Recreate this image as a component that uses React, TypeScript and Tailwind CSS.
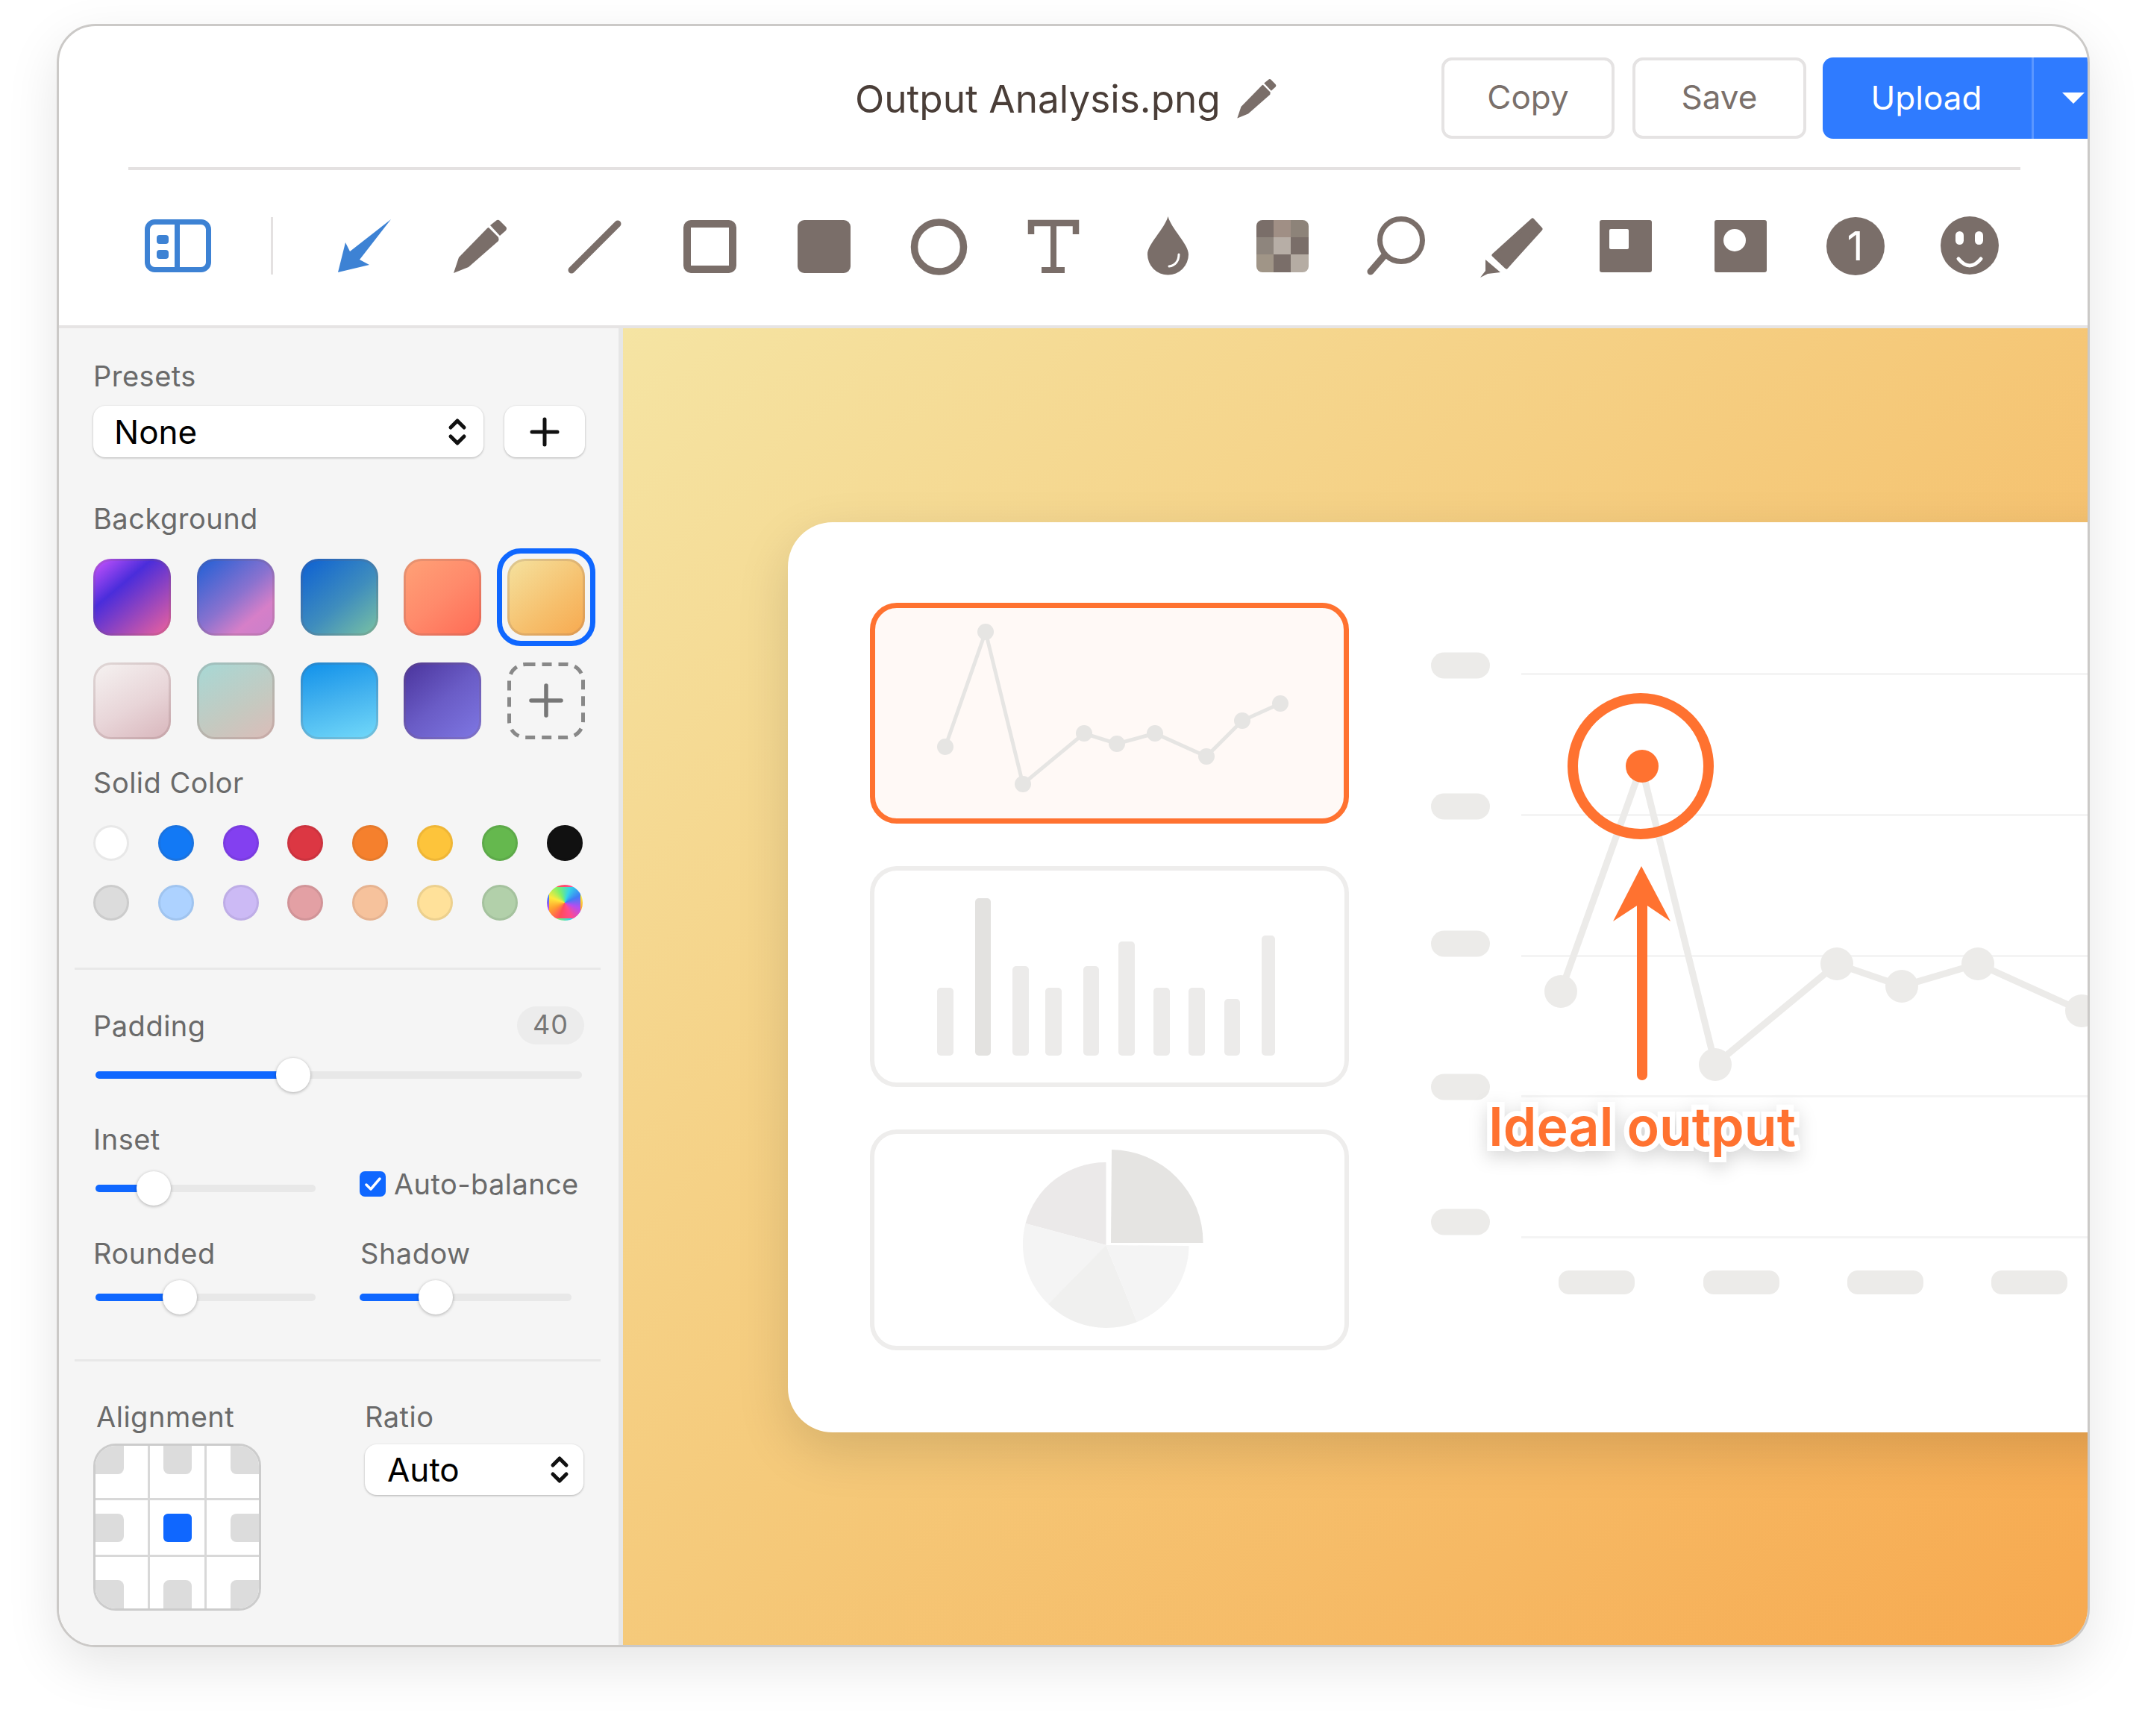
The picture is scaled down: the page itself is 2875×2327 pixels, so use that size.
const ink = "#7a6e69";

const swatches = [
  "bg-[linear-gradient(140deg,#cf55ff_0%,#4a2ddb_35%,#f2639b_100%)]",
  "bg-[linear-gradient(140deg,#1d5fd6_0%,#8a72cf_50%,#d67fc8_75%,#c97fcb_100%)]",
  "bg-[linear-gradient(140deg,#0b5fd4_0%,#3f8dbd_55%,#7cc4a2_100%)]",
  "bg-[linear-gradient(140deg,#ffa277_0%,#ff8a6b_50%,#ff6a54_100%)]",
  "bg-[linear-gradient(140deg,#f5e3a0_0%,#f6bf6c_60%,#f7a94f_100%)]",
  "bg-[linear-gradient(150deg,#f6f3f2_0%,#e8d5d8_55%,#d8b5bb_100%)]",
  "bg-[linear-gradient(150deg,#a6d9d6_0%,#c5c9c0_60%,#dcbcb8_100%)]",
  "bg-[linear-gradient(165deg,#0f90ea_0%,#46b4ef_50%,#73dafa_100%)]",
  "bg-[linear-gradient(140deg,#4a339b_0%,#6a5cc6_50%,#7f78e4_100%)]",
];

const solids = [
  "bg-white border-[#e8e8e8]", "bg-[#1279f5] border-[#1a73e0]", "bg-[#8340f0] border-[#7a3ce0]", "bg-[#dc3743] border-[#cc333f]",
  "bg-[#f5802d] border-[#e67a2c]", "bg-[#fdc43b] border-[#efb636]", "bg-[#65b84e] border-[#5daa49]", "bg-[#111111] border-[#111111]",
  "bg-[#dcdcdc] border-[#cccccc]", "bg-[#add2ff] border-[#a0c4ef]", "bg-[#ccbaf5] border-[#beade6]", "bg-[#e3a0a4] border-[#d19498]",
  "bg-[#f6c29c] border-[#e6b391]", "bg-[#ffe19a] border-[#ecd08e]", "bg-[#b2d0aa] border-[#a5c29e]",
  "bg-[conic-gradient(from_200deg,#ff4b5c,#ff9f2e,#ffe93c,#7df06a,#34d4e8,#3f7cf5,#b64df0,#ff4b8e,#ff4b5c)] border-transparent",
];

const alignCells = [
  "items-start justify-start", "items-start justify-center", "items-start justify-end",
  "items-center justify-start", "items-center justify-center", "items-center justify-end",
  "items-end justify-start", "items-end justify-center", "items-end justify-end",
];

const blockShape = [
  "rounded-br-[8px]", "rounded-b-[8px]", "rounded-bl-[8px]",
  "rounded-r-[8px]", "rounded-[6px]", "rounded-l-[8px]",
  "rounded-tr-[8px]", "rounded-t-[8px]", "rounded-tl-[8px]",
];

const mosaic = ["#7a6e69", "#a08f85", "#8d8379", "#8e857d", "#b7aea6", "#7a6e69", "#a09587", "#7a6e69", "#b5aca3"];

const barData = [
  [1257, 22, 1324, "#ecebea"], [1308, 21, 1204, "#e3e2e0"], [1358, 22, 1295, "#ecebea"], [1402, 22, 1324, "#ecebea"],
  [1453, 21, 1295, "#ecebea"], [1500, 22, 1262, "#ecebea"], [1547, 22, 1324, "#ecebea"], [1594, 22, 1324, "#ecebea"],
  [1642, 21, 1339, "#ecebea"], [1692, 18, 1254, "#ecebea"],
] as const;

const smallLine = [[1268, 1002], [1322, 848], [1372, 1052], [1454, 984], [1498, 998], [1549, 984], [1618, 1015], [1666, 967], [1717, 944]];
const bigLine = [[2092, 1329], [2200, 1027], [2299, 1427], [2462, 1292], [2549, 1322], [2651, 1292], [2790, 1355]];

const PencilIcon = ({ size = 90, color = ink }: { size?: number; color?: string }) => (
  <svg width={size} height={size} viewBox="0 0 90 90" fill={color}>
    <path d="M57 20 L70 33 Q71 36 70 38 L30 73 L10 81 L17 60 L55 21 Q56 20 57 20Z" />
    <path d="M68 10 Q70 9 72 11 L80 19 Q82 21 80 24 L72 31 L59 17Z" />
  </svg>
);

const Tool = ({ children }: { children: React.ReactNode }) => (
  <div className="flex h-[90px] w-[153.6px] shrink-0 items-center justify-center">{children}</div>
);

const ToolSvg = ({ children }: { children: React.ReactNode }) => (
  <svg width="90" height="90" viewBox="0 0 90 90" fill={ink}>
    {children}
  </svg>
);

const Label = ({ children, className = "" }: { children: React.ReactNode; className?: string }) => (
  <div className={`h-[44px] text-[38px] leading-[44px] tracking-[0.5px] text-[#6a6a6a] ${className}`}>{children}</div>
);

const Chevrons = () => (
  <svg width="26" height="38" viewBox="0 0 26 38" fill="none" stroke="#111" strokeWidth="5" strokeLinecap="round" strokeLinejoin="round">
    <path d="M4 13 L13 4 L22 13" />
    <path d="M4 25 L13 34 L22 25" />
  </svg>
);

const Slider = ({ width, thumb }: { width: number; thumb: number }) => (
  <div className="relative flex h-[46px] shrink-0 items-center" style={{ width }}>
    <div className="h-[10px] w-full overflow-hidden rounded-full bg-[#e8e8e8]">
      <div className="h-full bg-[#0f67ff]" style={{ width: thumb }} />
    </div>
    <div
      className="absolute top-0 h-[46px] w-[46px] rounded-full bg-white shadow-[0_1px_4px_rgba(0,0,0,0.3)]"
      style={{ left: thumb - 23 }}
    />
  </div>
);

const ThumbCard = ({ children, active = false }: { children: React.ReactNode; active?: boolean }) => (
  <div
    className={`h-[296px] w-[642px] overflow-hidden rounded-[36px] ${
      active ? "border-[7px] border-[#ff7230] bg-[#fff9f6]" : "border-[6px] border-[#eeedec] bg-white"
    }`}
  >
    {children}
  </div>
);

const Header = () => (
  <header className="shrink-0">
    <div className="relative flex h-[189px] items-start">
      <div className="ml-[1067px] mt-[64px] flex items-center">
        <span className="text-[51.3px] leading-[60px] text-[#4a3e38]">Output Analysis.png</span>
        <span className="ml-[15px]">
          <PencilIcon size={66} />
        </span>
      </div>
      <div className="absolute right-0 top-[42px] flex">
        <button className="mr-[24px] h-[109px] w-[232px] rounded-[14px] border-4 border-[#e5e3e3] pb-[4px] text-[44px] text-[#7a706b]">Copy</button>
        <button className="mr-[22px] h-[109px] w-[233px] rounded-[14px] border-4 border-[#e5e3e3] pb-[4px] text-[44px] text-[#7a706b]">Save</button>
        <div className="flex h-[109px] w-[355px] rounded-l-[14px] bg-[#2f7bff]">
          <button className="w-[283px] border-r-[3px] border-[#5b97ff] pb-[2px] pr-[2px] text-[44px] text-white">Upload</button>
          <div className="flex flex-1 items-center justify-end pr-[4px]">
            <div className="h-0 w-0 border-x-[15px] border-t-[15px] border-x-transparent border-t-white" />
          </div>
        </div>
      </div>
    </div>
    <div className="ml-[93px] h-[4px] w-[2536px] bg-[#e4e1e1]" />
    <div className="flex h-[208px] items-center pb-[5px] pl-[115px]">
      <svg width="89" height="71" viewBox="0 0 89 71" fill="none" className="shrink-0">
        <rect x="3.5" y="3.5" width="82" height="64" rx="10" stroke="#3d82d4" strokeWidth="7" />
        <path d="M43.5 3 V68" stroke="#3d82d4" strokeWidth="7" />
        <rect x="16" y="21" width="16" height="12" rx="4" fill="#3d82d4" />
        <rect x="16" y="41" width="16" height="12" rx="4" fill="#3d82d4" />
      </svg>
      <div className="ml-[80px] mr-[47px] h-[77px] w-[3px] shrink-0 bg-[#e4e1e1]" />
      <div className="flex">
        <Tool>
          <ToolSvg>
            <path d="M79 9 L37 63 L50 70 L8 80 L18 40 L24 52Z" fill="#3d82d4" />
          </ToolSvg>
        </Tool>
        <Tool>
          <PencilIcon />
        </Tool>
        <Tool>
          <ToolSvg>
            <path d="M76 15 L14 77" stroke={ink} strokeWidth="9" strokeLinecap="round" />
          </ToolSvg>
        </Tool>
        <Tool>
          <ToolSvg>
            <rect x="15" y="15" width="61" height="61" rx="5" fill="none" stroke={ink} strokeWidth="10" />
          </ToolSvg>
        </Tool>
        <Tool>
          <ToolSvg>
            <rect x="10" y="10" width="71" height="71" rx="9" />
          </ToolSvg>
        </Tool>
        <Tool>
          <ToolSvg>
            <circle cx="45.5" cy="46" r="33" fill="none" stroke={ink} strokeWidth="9.5" />
          </ToolSvg>
        </Tool>
        <Tool>
          <ToolSvg>
            <path d="M16 29 V14 H76 V29" fill="none" stroke={ink} strokeWidth="8.5" />
            <path d="M46 14 V77 M30 77 H61" fill="none" stroke={ink} strokeWidth="8" />
          </ToolSvg>
        </Tool>
        <Tool>
          <ToolSvg>
            <path d="M45.5 5 C50 22 73 42 73 56 A27.5 27.5 0 0 1 18 56 C18 42 41 22 45.5 5Z" />
            <path d="M60 56 C60 65 55 71 47 72" fill="none" stroke="#fff" strokeWidth="3" strokeLinecap="round" />
          </ToolSvg>
        </Tool>
        <Tool>
          <div className="grid h-[70px] w-[70px] grid-cols-3 grid-rows-3 overflow-hidden rounded-[8px]">
            {mosaic.map((c, i) => (
              <div key={i} style={{ background: c }} />
            ))}
          </div>
        </Tool>
        <Tool>
          <ToolSvg>
            <circle cx="51" cy="37" r="28.5" fill="none" stroke={ink} strokeWidth="7" />
            <path d="M29 57 L10 79" stroke={ink} strokeWidth="9" strokeLinecap="round" />
          </ToolSvg>
        </Tool>
        <Tool>
          <ToolSvg>
            <path d="M73 10 L84 22 L38 73 L21 57Z" stroke={ink} strokeWidth="5" strokeLinejoin="round" />
            <path d="M10 63 L30 80 L13 82 L3 87 L10 78Z" />
          </ToolSvg>
        </Tool>
        <Tool>
          <ToolSvg>
            <rect x="10" y="10" width="70" height="70" rx="3" />
            <rect x="23" y="22" width="26" height="27" rx="2" fill="#fff" />
          </ToolSvg>
        </Tool>
        <Tool>
          <ToolSvg>
            <rect x="10" y="10" width="70" height="70" rx="3" />
            <circle cx="37" cy="37" r="15" fill="#fff" />
          </ToolSvg>
        </Tool>
        <Tool>
          <div className="flex h-[78px] w-[78px] items-center justify-center rounded-full bg-[#7a6e69] text-[54px] leading-none text-white">
            1
          </div>
        </Tool>
        <Tool>
          <ToolSvg>
            <circle cx="45" cy="44" r="39" />
            <rect x="26" y="25" width="11" height="18" rx="5.5" fill="#fff" />
            <rect x="52" y="25" width="11" height="18" rx="5.5" fill="#fff" />
            <path d="M30 62 Q45 80 60 62" fill="none" stroke="#fff" strokeWidth="5" strokeLinecap="round" />
          </ToolSvg>
        </Tool>
      </div>
    </div>
  </header>
);

const Sidebar = () => (
  <aside className="h-full w-[756px] shrink-0 border-r-[6px] border-[#e6e6e6] bg-[#f5f5f5] pl-[46px] pt-[42px]">
    <Label>Presets</Label>
    <div className="mt-[18px] flex gap-[28px]">
      <div className="flex h-[69px] w-[523px] items-center justify-between rounded-[16px] bg-white pl-[28px] pr-[22px] text-[44px] text-black shadow-[0_1px_3px_rgba(0,0,0,0.28)]">
        <span>None</span>
        <Chevrons />
      </div>
      <div className="flex h-[69px] w-[108px] items-center justify-center rounded-[16px] bg-white shadow-[0_1px_3px_rgba(0,0,0,0.28)]">
        <svg width="40" height="40" viewBox="0 0 40 40" stroke="#111" strokeWidth="5" strokeLinecap="round">
          <path d="M20 3 V37 M3 20 H37" />
        </svg>
      </div>
    </div>

    <Label className="mt-[60px]">Background</Label>
    <div className="mt-[32px] grid w-[658px] grid-cols-[repeat(5,104px)] gap-x-[34.8px] gap-y-[36px]">
      {swatches.map((s, i) => (
        <div key={s} className="relative h-[103px] w-[104px]">
          {i === 4 && <div className="absolute -inset-x-[14px] -inset-y-[14px] rounded-[32px] border-[7px] border-[#0f67ff]" />}
          <div className={`h-full w-full rounded-[24px] shadow-[inset_0_0_0_3px_rgba(120,90,90,0.18)] ${s}`} />
        </div>
      ))}
      <div className="flex h-[103px] w-[104px] items-center justify-center">
        <svg width="104" height="103" viewBox="0 0 104 103" fill="none">
          <rect x="2.5" y="2.5" width="99" height="98" rx="22" stroke="#888888" strokeWidth="5" strokeDasharray="13 9" />
          <path d="M52 31 V71 M32 51 H72" stroke="#777" strokeWidth="5.5" strokeLinecap="round" />
        </svg>
      </div>
    </div>

    <Label className="mt-[36px]">Solid Color</Label>
    <div className="mt-[35px] grid w-[658px] grid-cols-[repeat(8,48px)] gap-x-[38.8px] gap-y-[32px]">
      {solids.map((c) => (
        <div key={c} className={`h-[48px] w-[48px] rounded-full border-[3px] ${c}`} />
      ))}
    </div>

    <div className="-ml-[25px] mt-[63px] h-[3px] w-[705px] bg-[#e8e8e8]" />

    <div className="mt-[49px] flex h-[51px] w-[658px] items-center justify-between">
      <Label>Padding</Label>
      <div className="flex h-[51px] w-[90px] items-center justify-center rounded-full bg-[#ececec] pb-[3px] text-[36px] tracking-[1px] text-[#777777]">40</div>
    </div>
    <div className="ml-[3px] mt-[18px]">
      <Slider width={652} thumb={265} />
    </div>

    <Label className="mt-[41px]">Inset</Label>
    <div className="ml-[3px] mt-[21px] flex">
      <Slider width={295} thumb={78} />
      <div className="-mt-[6px] ml-[59px] flex h-[46px] items-center">
        <div className="flex h-[34px] w-[35px] items-center justify-center rounded-[7px] bg-[#0f67ff]">
          <svg width="24" height="22" viewBox="0 0 24 22" fill="none" stroke="#fff" strokeWidth="3.5" strokeLinecap="round" strokeLinejoin="round">
            <path d="M3 12 L9 18 L21 4" />
          </svg>
        </div>
        <span className="ml-[11px] text-[38px] tracking-[0.4px] text-[#6a6a6a]">Auto-balance</span>
      </div>
    </div>

    <div className="mt-[42px] flex">
      <Label className="w-[358px]">Rounded</Label>
      <Label>Shadow</Label>
    </div>
    <div className="ml-[3px] mt-[14px] flex">
      <Slider width={295} thumb={113} />
      <div className="ml-[59px]">
        <Slider width={284} thumb={102} />
      </div>
    </div>

    <div className="-ml-[25px] mt-[60px] h-[3px] w-[705px] bg-[#e8e8e8]" />

    <div className="mt-[52px] flex">
      <div className="w-[364px]">
        <Label className="ml-[4px]">Alignment</Label>
        <div className="mt-[14px] grid h-[224px] w-[225px] grid-cols-[70px_73px_70px] grid-rows-[70px_73px_69px] gap-[3px] overflow-hidden rounded-[30px] border-[3px] border-[#cccccc] bg-[#d8d8d8]">
          {alignCells.map((c, i) => (
            <div key={c} className={`flex bg-white ${c}`}>
              <div className={`h-[38px] w-[38px] ${i === 4 ? "bg-[#0f67ff]" : "bg-[#dcdcdc]"} ${blockShape[i]}`} />
            </div>
          ))}
        </div>
      </div>
      <div>
        <Label>Ratio</Label>
        <div className="mt-[15px] flex h-[68px] w-[293px] items-center justify-between rounded-[16px] bg-white pl-[30px] pr-[19px] text-[44px] text-black shadow-[0_1px_3px_rgba(0,0,0,0.28)]">
          <span>Auto</span>
          <Chevrons />
        </div>
      </div>
    </div>
  </aside>
);

const Thumbs = () => (
  <div className="flex shrink-0 flex-col gap-[57px]">
    <ThumbCard active>
      <svg width="628" height="282" viewBox="1174 816 628 282">
        <polyline points={smallLine.map((p) => p.join(",")).join(" ")} fill="none" stroke="#e6e5e3" strokeWidth="5" />
        {smallLine.map(([x, y]) => (
          <circle key={x} cx={x} cy={y} r="11" fill="#e6e5e3" />
        ))}
      </svg>
    </ThumbCard>
    <ThumbCard>
      <svg width="630" height="284" viewBox="1173 1167 630 284">
        {barData.map(([x, w, top, fill]) => (
          <rect key={x} x={x} y={top} width={w} height={1415 - top} rx="5" fill={fill} />
        ))}
      </svg>
    </ThumbCard>
    <ThumbCard>
      <svg width="630" height="284" viewBox="1173 1520 630 284">
        <path d="M1483.5 1669 L1483.5 1558 A111 111 0 0 0 1375.5 1640Z" fill="#ebe9e9" />
        <path d="M1483.5 1669 L1375.5 1640 A111 111 0 0 0 1406 1748Z" fill="#f4f4f4" />
        <path d="M1483.5 1669 L1406 1748 A111 111 0 0 0 1525 1772Z" fill="#f0f0ef" />
        <path d="M1483.5 1669 L1525 1772 A111 111 0 0 0 1594.5 1670Z" fill="#f4f4f4" />
        <path d="M1490 1666 L1491 1541 A124 124 0 0 1 1613.5 1666Z" fill="#e5e4e2" />
      </svg>
    </ThumbCard>
  </div>
);

const MainChart = () => (
  <div className="relative ml-[92px] mt-[52px] h-[900px] w-[900px] shrink-0">
    <svg width="900" height="900" viewBox="1900 860 900 900">
      {[892, 1081, 1265, 1457, 1638].map((y) => (
        <rect key={y} x="1918" y={y - 17.5} width="79" height="35" rx="17.5" fill="#ecebe9" />
      ))}
      {[902, 1091, 1280, 1468, 1657].map((y) => (
        <rect key={y} x="2039" y={y} width="800" height="3" fill="#f4f4f4" />
      ))}
      {[2089, 2283, 2476, 2669].map((x) => (
        <rect key={x} x={x} y="1703" width="102" height="32" rx="14" fill="#ecebe9" />
      ))}
      <polyline points={bigLine.map((p) => p.join(",")).join(" ")} fill="none" stroke="#ecebe9" strokeWidth="9" />
      {bigLine.slice(0, 1).concat(bigLine.slice(2)).map(([x, y]) => (
        <circle key={x} cx={x} cy={y} r="22" fill="#ecebe9" />
      ))}
      <circle cx="2199" cy="1027" r="91" fill="none" stroke="#ff7230" strokeWidth="14" />
      <circle cx="2201" cy="1027" r="22" fill="#ff7230" />
      <path d="M2200 1161 L2239 1235 L2208 1214 V1441 A7 7 0 0 1 2194 1441 V1214 L2162 1235Z" fill="#ff7230" />
    </svg>
    <div className="absolute left-[95px] top-[615px] text-[71.6px] font-semibold leading-none text-[#ff7230] [-webkit-text-stroke:14px_white] [filter:drop-shadow(0_8px_12px_rgba(0,0,0,0.16))] [paint-order:stroke_fill]">
      Ideal output
    </div>
  </div>
);

const Canvas = () => (
  <main className="min-w-0 flex-1 overflow-hidden bg-[linear-gradient(135deg,#f5e4a3_0%,#f5c878_50%,#f7a94f_100%)] pl-[221px] pt-[260px]">
    <div className="flex h-[1220px] w-[1900px] rounded-[60px] bg-white pl-[110px] pt-[108px] shadow-[0_24px_70px_rgba(0,0,0,0.13)]">
      <Thumbs />
      <MainChart />
    </div>
  </main>
);

const App = () => {
  return (
    <div className="h-[2327px] w-[2875px] overflow-hidden bg-white pl-[76px] pt-[32px] font-['Inter',sans-serif]">
      <div className="flex h-[2176px] w-[2725px] flex-col overflow-hidden rounded-[52px] border-[3px] border-[#cbc9c7] bg-white shadow-[0_24px_70px_rgba(0,0,0,0.1)]">
        <Header />
        <div className="flex min-h-0 flex-1 border-t-[4px] border-[#e6e4e4]">
          <Sidebar />
          <Canvas />
        </div>
      </div>
    </div>
  );
};

export default App;
